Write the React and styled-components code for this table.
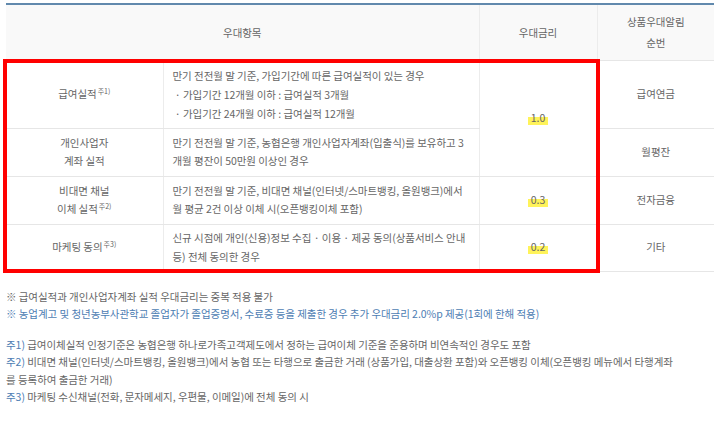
import React from "react";
import styled, { createGlobalStyle } from "styled-components";

const Global = createGlobalStyle`
  html, body { margin: 0; padding: 0; background: #fff; }
  body {
    font-family: "Noto Sans CJK KR", "Noto Sans", sans-serif;
    color: #666;
  }
`;

const Page = styled.div`
  width: 720px;
  height: 421px;
  padding: 3px 6px 0 6px;
  box-sizing: border-box;
  overflow: hidden;
`;

const TableWrap = styled.div`
  position: relative;
  width: 708px;
`;

const Table = styled.table`
  width: 708px;
  border-collapse: collapse;
  table-layout: fixed;
  border-top: 2px solid #6189ad;
  font-size: 10.5px;
  letter-spacing: -0.05px;
  color: #666;
`;

const HeadRow = styled.tr`
  height: 56px;
  background: #f9f9f9;
`;

const Th = styled.th`
  font-weight: 400;
  text-align: center;
  vertical-align: middle;
  line-height: 21px;
  border-bottom: 1px solid #e6e6e6;
  border-left: ${(p) => (p.$first ? "none" : "1px solid #ececec")};
  padding: 0;
`;

const Row = styled.tr`
  height: ${(p) => p.$h}px;
`;

const Td = styled.td`
  text-align: ${(p) => (p.$left ? "left" : "center")};
  vertical-align: middle;
  line-height: ${(p) => (p.$lh ? p.$lh : 18.5)}px;
  padding: ${(p) => (p.$left ? "0 0 0 9px" : "0")};
  border-bottom: 1px solid #e6e6e6;
  border-left: ${(p) => (p.$first ? "none" : "1px solid #ececec")};
  white-space: nowrap;
  overflow: hidden;
`;

const Sup = styled.sup`
  font-size: 7px;
  vertical-align: top;
  position: relative;
  top: -3px;
  margin-left: 1px;
  letter-spacing: 0;
`;

const Mark = styled.span`
  background: linear-gradient(
    to bottom,
    transparent 0,
    transparent 45%,
    #fff35a 45%,
    #fff35a 100%
  );
  padding: 0 3px;
`;

const RedBox = styled.div`
  position: absolute;
  left: -3px;
  top: 56px;
  width: 597px;
  height: 214px;
  border: 4px solid #ff0000;
  box-sizing: border-box;
  pointer-events: none;
`;

const Notes = styled.div`
  margin-top: 16px;
  font-size: 10.5px;
  letter-spacing: -0.05px;
  line-height: 17.5px;
`;

const Line = styled.div`
  color: ${(p) => (p.$blue ? "#4d7db3" : "#666")};
  margin-top: ${(p) => (p.$gap ? 13 : 0)}px;
  white-space: nowrap;
`;

const Tag = styled.span`
  color: #4d7db3;
`;

export default function App() {
  return (
    <Page>
      <Global />
      <TableWrap>
        <Table>
          <colgroup>
            <col style={{ width: 157 }} />
            <col style={{ width: 316 }} />
            <col style={{ width: 118 }} />
            <col style={{ width: 117 }} />
          </colgroup>
          <thead>
            <HeadRow>
              <Th $first colSpan={2}>우대항목</Th>
              <Th>우대금리</Th>
              <Th>
                상품우대알림
                <br />
                순번
              </Th>
            </HeadRow>
          </thead>
          <tbody>
            <Row $h={68}>
              <Td $first>
                급여실적<Sup>주1)</Sup>
              </Td>
              <Td $left $lh={19}>
                만기 전전월 말 기준, 가입기간에 따른 급여실적이 있는 경우
                <br />
                &nbsp;· 가입기간 12개월 이하 : 급여실적 3개월
                <br />
                &nbsp;· 가입기간 24개월 이하 : 급여실적 12개월
              </Td>
              <Td rowSpan={2}>
                <Mark>1.0</Mark>
              </Td>
              <Td>급여연금</Td>
            </Row>
            <Row $h={48}>
              <Td $first>
                개인사업자
                <br />
                계좌 실적
              </Td>
              <Td $left>
                만기 전전월 말 기준, 농협은행 개인사업자계좌(입출식)를 보유하고 3
                <br />
                개월 평잔이 50만원 이상인 경우
              </Td>
              <Td>월평잔</Td>
            </Row>
            <Row $h={48}>
              <Td $first>
                비대면 채널
                <br />
                이체 실적<Sup>주2)</Sup>
              </Td>
              <Td $left>
                만기 전전월 말 기준, 비대면 채널(인터넷/스마트뱅킹, 올원뱅크)에서
                <br />
                월 평균 2건 이상 이체 시(오픈뱅킹이체 포함)
              </Td>
              <Td>
                <Mark>0.3</Mark>
              </Td>
              <Td>전자금융</Td>
            </Row>
            <Row $h={47}>
              <Td $first>
                마케팅 동의<Sup>주3)</Sup>
              </Td>
              <Td $left>
                신규 시점에 개인(신용)정보 수집 · 이용 · 제공 동의(상품서비스 안내
                <br />
                등) 전체 동의한 경우
              </Td>
              <Td>
                <Mark>0.2</Mark>
              </Td>
              <Td>기타</Td>
            </Row>
          </tbody>
        </Table>
        <RedBox />
      </TableWrap>
      <Notes>
        <Line>※ 급여실적과 개인사업자계좌 실적 우대금리는 중복 적용 불가</Line>
        <Line $blue>
          ※ 농업계고 및 청년농부사관학교 졸업자가 졸업증명서, 수료증 등을 제출한 경우 추가 우대금리 2.0%p 제공(1회에 한해 적용)
        </Line>
        <Line $gap>
          <Tag>주1)</Tag> 급여이체실적 인정기준은 농협은행 하나로가족고객제도에서 정하는 급여이체 기준을 준용하며 비연속적인 경우도 포함
        </Line>
        <Line>
          <Tag>주2)</Tag> 비대면 채널(인터넷/스마트뱅킹, 올원뱅크)에서 농협 또는 타행으로 출금한 거래 (상품가입, 대출상환 포함)와 오픈뱅킹 이체(오픈뱅킹 메뉴에서 타행계좌
        </Line>
        <Line>를 등록하여 출금한 거래)</Line>
        <Line>
          <Tag>주3)</Tag> 마케팅 수신채널(전화, 문자메세지, 우편물, 이메일)에 전체 동의 시
        </Line>
      </Notes>
    </Page>
  );
}
